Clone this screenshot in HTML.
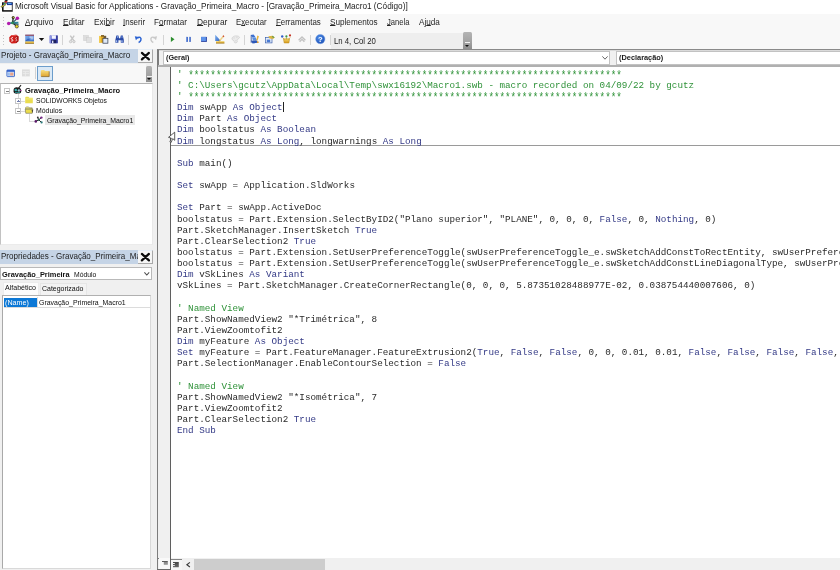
<!DOCTYPE html>
<html lang="pt-BR">
<head>
<meta charset="utf-8">
<title>Microsoft Visual Basic for Applications - Gravação_Primeira_Macro</title>
<style>
*{box-sizing:border-box;margin:0;padding:0}
html,body{width:840px;height:570px;overflow:hidden;background:#fff}
body{position:relative;font-family:"Liberation Sans",sans-serif;color:#222}
.a{position:absolute}
.t{position:absolute;white-space:nowrap;line-height:12px;height:12px;transform-origin:0 50%;filter:blur(0.3px)}
u{text-decoration:underline;text-underline-offset:0.2px;text-decoration-thickness:0.6px}
svg{position:absolute;overflow:visible;filter:blur(0.3px)}
.sep{position:absolute;width:1px;background:#d4d4d4;top:35px;height:9.6px}
#code{left:177px;top:68.7px;font-family:"Liberation Mono",monospace;font-size:9.283px;line-height:11.14px;color:#2a2a2a;white-space:pre;filter:blur(0.3px)}
#code .k{color:#343a86}
#code .c{color:#2f9239}
#code .s{display:inline-block;transform:translateY(1.4px) scale(1,1.3)}
</style>
</head>
<body>
<!-- ===== title bar ===== -->
<div class="a" style="left:0;top:0;width:840px;height:13.5px;background:#fff"></div>

<!-- ===== menu bar / toolbar dock ===== -->
<div class="a" style="left:0;top:13.6px;width:840px;height:36px;background:#f8f8f8"></div>
<div class="a" style="left:331.4px;top:33.3px;width:131.9px;height:15.8px;background:#eeeeee"></div>
<!-- toolbar end grip -->
<div class="a" style="left:463.3px;top:31.7px;width:8.3px;height:17.3px;border-radius:1.5px 1.5px 0 0;background:linear-gradient(#b4b4b4,#a2a2a2 60%,#8e8e8e)"></div>
<div class="a" style="left:465px;top:42.3px;width:5px;height:1px;background:#f2f2f2"></div>
<div class="a" style="left:465.2px;top:44.5px;width:0;height:0;border-left:2.3px solid transparent;border-right:2.3px solid transparent;border-top:2.6px solid #111"></div>
<!-- grips -->
<div class="a" style="left:3.2px;top:16.9px;width:1.3px;height:10px;background:repeating-linear-gradient(#c4c4c4 0 1.1px,transparent 1.1px 2.85px)"></div>
<div class="a" style="left:3.2px;top:34.9px;width:1.3px;height:10px;background:repeating-linear-gradient(#c4c4c4 0 1.1px,transparent 1.1px 2.85px)"></div>
<!-- toolbar separators -->
<div class="sep" style="left:62px"></div>
<div class="sep" style="left:128px"></div>
<div class="sep" style="left:162.5px"></div>
<div class="sep" style="left:244px"></div>
<div class="sep" style="left:310px"></div>
<div class="sep" style="left:329.5px"></div>
<!-- toolbar icons (coordinates in page px via viewBox) -->
<svg style="left:0;top:30px" width="340" height="20" viewBox="0 30 340 20">
<defs>
<linearGradient id="gb" x1="0" y1="0" x2="1" y2="1"><stop offset="0" stop-color="#7fb2ee"/><stop offset="1" stop-color="#2f62c4"/></linearGradient>
<linearGradient id="gy" x1="0" y1="0" x2="0" y2="1"><stop offset="0" stop-color="#f3d56a"/><stop offset="1" stop-color="#d79a1c"/></linearGradient>
<radialGradient id="gh" cx="0.4" cy="0.35" r="0.7"><stop offset="0" stop-color="#4d8eea"/><stop offset="1" stop-color="#1c4fb4"/></radialGradient>
</defs>
<!-- solidworks -->
<path d="M9.3 37.2 L11.2 35.2 L16.2 34.8 L18.5 36.6 L18.4 41.2 L16 43.3 L11.6 43.4 L9.4 41.5Z" fill="#cf1f1b"/>
<path d="M16.2 34.8 L18.5 36.6 L18.4 41.2 L16 43.3Z" fill="#a41412"/>
<path d="M11.2 35.2 L16.2 34.8 L17.3 35.8 L12 36.3Z" fill="#e4524c"/>
<path d="M12.9 37.6 C11 37.3 10.8 39.2 12.1 39.5 C13.4 39.8 13.2 41.5 11.2 41" stroke="#fff" stroke-width="1" fill="none"/>
<path d="M16.9 37.6 C15.6 37.4 15.5 39 16.3 39.4 C17.1 39.8 17 41.2 15.6 40.9" stroke="#f3d0d0" stroke-width="0.9" fill="none"/>
<!-- userform -->
<rect x="25.2" y="34.8" width="8.8" height="8.6" fill="url(#gb)"/>
<rect x="25.2" y="34.6" width="8.8" height="1.3" fill="#9a5468"/>
<rect x="29.5" y="36.6" width="4" height="1" fill="#e9f1fb"/>
<rect x="30.5" y="38.4" width="3" height="0.9" fill="#dbe8f8"/>
<path d="M25.6 40.6 L28.2 38.4 L30.5 40.2 L25.6 41.3Z" fill="#2a57b6" opacity=".8"/>
<rect x="25.2" y="41.4" width="8.8" height="2.1" fill="url(#gy)"/>
<rect x="25.2" y="43" width="8.8" height="0.6" fill="#9a7a30"/>
<!-- dropdown arrow -->
<path d="M38.9 38.1 H44.2 L41.55 41Z" fill="#111"/>
<!-- save -->
<rect x="49.7" y="35.4" width="7.9" height="7.8" rx="0.5" fill="#4a54c4"/>
<rect x="49.7" y="35.4" width="1.3" height="7.8" fill="#8b93e2"/>
<rect x="56.4" y="35.4" width="1.2" height="7.8" fill="#2a2f86"/>
<rect x="51.6" y="35.4" width="4.3" height="3.4" fill="#f4f6ff"/>
<rect x="51.4" y="40" width="4.8" height="3.2" fill="#1d215e"/>
<rect x="52" y="40.6" width="1.4" height="2.6" fill="#dfe3fa"/>
<!-- cut (disabled) -->
<path d="M70.3 35.6 L73.8 40.6 M74.2 35.6 L70.7 40.6" stroke="#c6c6c6" stroke-width="1.4" fill="none"/>
<circle cx="70.6" cy="41.6" r="1.2" stroke="#c6c6c6" stroke-width="1" fill="#e4e4e4"/>
<circle cx="73.9" cy="41.6" r="1.2" stroke="#c6c6c6" stroke-width="1" fill="#e4e4e4"/>
<!-- copy (disabled) -->
<rect x="83.5" y="35.5" width="5" height="5.2" fill="#dedede" stroke="#cfcfcf" stroke-width="0.5"/>
<rect x="86.7" y="37.6" width="5" height="5" fill="#e1e1e1" stroke="#cbcbcb" stroke-width="0.5"/>
<!-- paste -->
<rect x="99.1" y="35.9" width="6.4" height="6.9" rx="0.6" fill="#e6ad22"/>
<rect x="99.1" y="35.9" width="1.6" height="6.9" fill="#f3cf55"/>
<rect x="101" y="35" width="3" height="1.8" fill="#8a6a2c"/>
<rect x="103.6" y="35.8" width="2.6" height="2.4" fill="#6f5a36"/>
<rect x="102.9" y="38.3" width="5" height="4.9" fill="#dfe9f7" stroke="#2c3448" stroke-width="0.7"/>
<!-- find -->
<path d="M116.4 35.6 h2 l0.6 2.6 h1.2 l0.6 -2.6 h2 l1 4.2 v3 h-3 v-2.6 h-2.4 v2.6 h-3 v-3Z" fill="#2b4aa6"/>
<rect x="115.9" y="40.3" width="1.3" height="2" fill="#a8c2f2"/>
<rect x="121.3" y="40.3" width="1.3" height="2" fill="#a8c2f2"/>
<rect x="117" y="36" width="0.9" height="2" fill="#7ea0e6"/>
<rect x="121.6" y="36" width="0.9" height="2" fill="#7ea0e6"/>
<!-- undo -->
<path d="M137.4 38.3 C139.2 36 141.6 37.6 140.9 40 C140.5 41.4 139.6 42.1 138.6 42.5" stroke="#2a62d2" stroke-width="1.5" fill="none"/>
<path d="M134.8 36.3 L138.9 36.9 L135.9 40.3Z" fill="#2a62d2"/>
<!-- redo (disabled) -->
<path d="M154.5 38.3 C152.7 36 150.3 37.6 151 40 C151.4 41.4 152.3 42.1 153.3 42.5" stroke="#c9c9c9" stroke-width="1.4" fill="none"/>
<path d="M157.1 36.3 L153 36.9 L156 40.3Z" fill="#c9c9c9"/>
<!-- run -->
<path d="M170.9 36.7 L174.5 39.3 L170.9 42Z" fill="#2b8d2d"/>
<!-- pause -->
<rect x="186.1" y="36.9" width="1.8" height="5" fill="#3a62c4"/>
<rect x="189" y="36.9" width="1.8" height="5" fill="#3a62c4"/>
<rect x="186.1" y="36.9" width="0.7" height="5" fill="#84a8ea"/>
<rect x="189" y="36.9" width="0.7" height="5" fill="#84a8ea"/>
<!-- stop -->
<rect x="201.1" y="36.9" width="5.8" height="5" fill="#2b44a2"/>
<rect x="201.1" y="36.9" width="4.8" height="4.1" fill="#5f94ea"/>
<!-- design mode -->
<path d="M215.2 34.8 L221 41 L215.2 41Z" fill="url(#gb)"/>
<path d="M223.3 35.3 L224.4 36.3 L220.1 41.3 L218.7 41.5 L219 40.2Z" fill="#ecd28a"/>
<path d="M223.3 35.3 L224.4 36.3 L223.6 37.2 L222.5 36.2Z" fill="#cf4a3a"/>
<path d="M219 40.2 L220.1 41.3 L218.5 41.8Z" fill="#333"/>
<rect x="216" y="41.2" width="8.4" height="2.1" fill="url(#gy)"/>
<rect x="216" y="42.8" width="8.4" height="0.6" fill="#8e7228"/>
<!-- disabled palette -->
<path d="M232 38.2 C232.8 35.6 237.8 35.2 239.4 37 C240 38 238.2 38.8 237.3 39.5 C236.2 40.4 238.3 41.3 236.8 42.5 C235.5 43.4 233.8 42.6 234.2 41.4 C234.5 40.4 231.4 40.3 232 38.2Z" stroke="#cdcdcd" stroke-width="0.7" fill="#ebebeb"/>
<path d="M233.5 38 h1.4 M236 37.2 h1.6 M235 40.8 h1.4" stroke="#d2d2d2" stroke-width="0.7"/>
<!-- project explorer -->
<path d="M250.5 35 L253.6 34.6 L255.4 37 L252.6 37.5Z" fill="#3a6fd0"/>
<path d="M252 37.5 L255.5 37.2 L257 40 L253 40.5Z" fill="#5a8fe0"/>
<path d="M251 40.8 L256.5 40.3 L258.2 42.8 L252.5 43.4Z" fill="#2d58b8"/>
<path d="M251.2 35.5 V42.8" stroke="#27489a" stroke-width="0.8"/>
<path d="M257.3 35.4 L258.9 36.3 L257.5 40.7 L256.4 40.2Z" fill="#eab43a"/>
<circle cx="257.8" cy="42.2" r="0.9" fill="#e09a2a"/>
<!-- properties -->
<rect x="265.6" y="37.6" width="6.4" height="5.3" fill="#e4edf9" stroke="#3d62ae" stroke-width="0.7"/>
<rect x="266.8" y="39.6" width="3.4" height="2.6" fill="#4a7ad2"/>
<path d="M268.3 36.2 L272.5 35.8 L274.6 37.2 L273.2 39 L269.5 38.4Z" fill="#d9b341"/>
<path d="M272.5 35.8 L274.6 37.2 L274 38 L272 37Z" fill="#5e9a4a"/>
<!-- object browser -->
<path d="M283.4 38.8 H289.6 L288.9 43 H284.2Z" fill="url(#gy)" stroke="#b88a1e" stroke-width="0.5"/>
<path d="M282.6 37.6 L284.6 39.6 M290.2 37.4 L288.4 39.6 M286.5 37.4 V39.4" stroke="#c69a2a" stroke-width="0.7"/>
<circle cx="282.2" cy="36.4" r="1.2" fill="#2f5cc8"/>
<circle cx="286.4" cy="36.4" r="1.1" fill="#3c9a48"/>
<circle cx="290" cy="35.4" r="1.1" fill="#c43628"/>
<!-- toolbox (disabled) -->
<path d="M298.6 40.2 L302 37 L305.4 40.2 M299.6 41.8 L302 39.4 L304.4 41.8" stroke="#c2c2c2" stroke-width="1.3" fill="none"/>
<!-- help -->
<circle cx="320.3" cy="39.1" r="4.65" fill="url(#gh)" stroke="#7fa6e6" stroke-width="0.5"/>
<text x="320.3" y="41.9" font-family="Liberation Sans, sans-serif" font-size="7.6" font-weight="bold" fill="#fff" text-anchor="middle">?</text>
</svg>


<!-- ===== left dock ===== -->
<div class="a" style="left:0;top:49px;width:157px;height:521px;background:#f0f0f0"></div>
<!-- project title -->
<div class="a" style="left:0;top:49px;width:138px;height:14.3px;background:#c5d4e6"></div>
<div class="a" style="left:138px;top:49.2px;width:14.6px;height:14.2px;background:#f5f5f5;border-right:1px solid #a9a9a9;border-bottom:1px solid #a9a9a9;border-top:0.8px solid #e6eef6"></div>
<svg style="left:141.2px;top:52.1px" width="8.8" height="8.3" viewBox="0 0 8.8 8.3"><path d="M0.9 0.9L7.9 7.4M7.9 0.9L0.9 7.4" stroke="#0a0a0a" stroke-width="2.2" stroke-linecap="round" fill="none"/></svg>
<!-- project toolbar -->
<div class="a" style="left:0;top:64.3px;width:145.8px;height:18.4px;background:#f8f8f8"></div>
<div class="a" style="left:37px;top:65.5px;width:16px;height:15.8px;background:#dbe9f6;border:1px solid #6c9dcb"></div>
<div class="a" style="left:35px;top:67px;width:1px;height:12px;background:#d2d2d2"></div>
<div class="a" style="left:145.8px;top:66px;width:6.7px;height:16.3px;border-radius:1.5px 1.5px 0 0;background:linear-gradient(#b4b4b4,#a2a2a2 60%,#8e8e8e)"></div>
<div class="a" style="left:146.8px;top:76px;width:4.8px;height:1px;background:#f2f2f2"></div>
<div class="a" style="left:147px;top:78px;width:0;height:0;border-left:2.2px solid transparent;border-right:2.2px solid transparent;border-top:2.5px solid #111"></div>
<!-- tree box -->
<div class="a" style="left:0;top:82.8px;width:152.6px;height:162.2px;background:#fff;border:1px solid #b4b4b4;border-top:1.6px solid #b2b2b2;border-left:1.4px solid #c2c2c2;border-right-color:#e9e9e9;border-bottom-color:#ebebeb"></div>
<div class="a" style="left:45px;top:115.3px;width:89.5px;height:10px;background:#e9e9e9"></div>
<!-- tree lines -->
<div class="a" style="left:17.7px;top:94px;width:1px;height:4px;background:#d6d6d6"></div>
<div class="a" style="left:17.7px;top:104px;width:1px;height:4.3px;background:#d6d6d6"></div>
<div class="a" style="left:21px;top:100.5px;width:4px;height:1px;background:#dadada"></div>
<div class="a" style="left:21px;top:110.6px;width:4px;height:1px;background:#dadada"></div>
<div class="a" style="left:28.5px;top:114px;width:1px;height:7px;background:#d9d9d9"></div>
<div class="a" style="left:28.5px;top:120.5px;width:6px;height:1px;background:#d9d9d9"></div>
<!-- expanders -->
<div class="a" style="left:4.3px;top:88px;width:5.8px;height:5.8px;background:#fff;border:0.8px solid #c6c6c6"></div>
<div class="a" style="left:5.7px;top:90.5px;width:3px;height:0.8px;background:#808080"></div>
<div class="a" style="left:15.4px;top:98.2px;width:5.8px;height:5.8px;background:#fff;border:0.8px solid #c6c6c6"></div>
<div class="a" style="left:17px;top:100.7px;width:2.6px;height:0.8px;background:#7380b0"></div>
<div class="a" style="left:17.9px;top:99.8px;width:0.8px;height:2.6px;background:#7380b0"></div>
<div class="a" style="left:15.4px;top:108.3px;width:5.8px;height:5.8px;background:#fff;border:0.8px solid #c6c6c6"></div>
<div class="a" style="left:16.8px;top:110.75px;width:3px;height:0.8px;background:#808080"></div>

<!-- properties title -->
<div class="a" style="left:0;top:249.5px;width:138px;height:14.8px;background:#c5d4e6"></div>
<!-- combo -->
<div class="a" style="left:0;top:267.4px;width:152.3px;height:12.9px;background:#fff;border:0.8px solid #b9b9b9"></div>
<svg style="left:143.8px;top:272.2px" width="5.6" height="3.6" viewBox="0 0 5.6 3.6"><path d="M0.4 0.4L2.8 3L5.2 0.4" stroke="#4f4f4f" stroke-width="1.05" fill="none"/></svg>
<!-- tabs -->
<div class="a" style="left:40px;top:283.4px;width:46.8px;height:12px;background:#f3f3f3;border:0.8px solid #e6e6e6;border-bottom:none"></div>
<div class="a" style="left:2.8px;top:281.8px;width:36.4px;height:14px;background:#fcfcfc;border:0.8px solid #ececec;border-bottom:none"></div>
<!-- list -->
<div class="a" style="left:2.3px;top:295.2px;width:149.2px;height:274.2px;background:#fff;border:1px solid #b0b0b0;border-left:1.4px solid #a9a9a9;border-right-color:#d9d9d9;border-bottom-color:#d9d9d9"></div>
<div class="a" style="left:4.2px;top:297.5px;width:33px;height:9.3px;background:#0c78d6"></div>
<div class="a" style="left:4px;top:306.8px;width:146px;height:0.8px;background:#dcdcdc"></div>
<div class="a" style="left:37.3px;top:297px;width:0.8px;height:10px;background:#dcdcdc"></div>

<!-- ===== code window ===== -->
<div class="a" style="left:157px;top:49px;width:683px;height:521px;background:#f0f0f0;border-left:2px solid #7c7c7c;border-top:1.2px solid #8a8a8a"></div>
<!-- combos -->
<div class="a" style="left:158.5px;top:50.2px;width:682px;height:1.1px;background:#dadada"></div>
<div class="a" style="left:163.2px;top:51.1px;width:447.3px;height:13.6px;background:#fff;border:1px solid #c2c2c2"></div>
<div class="a" style="left:616.2px;top:51.1px;width:230px;height:13.6px;background:#fff;border:1px solid #c2c2c2"></div>
<svg style="left:601.9px;top:56.3px" width="6" height="3.8" viewBox="0 0 6 3.8"><path d="M0.4 0.4L3 3.2L5.6 0.4" stroke="#5c5c5c" stroke-width="0.95" fill="none"/></svg>
<!-- code area -->
<div class="a" style="left:158.2px;top:65.1px;width:682px;height:1.8px;background:#b0b0b0"></div>
<div class="a" style="left:158.2px;top:66.9px;width:682px;height:491.5px;background:#fff"></div>
<div class="a" style="left:158.2px;top:66.9px;width:12.9px;height:491.5px;background:#f0f0f0;border-right:1px solid #5f5f5f"></div>
<!-- procedure separator -->
<div class="a" style="left:171px;top:144.6px;width:669px;height:0.9px;background:#9a9a9a"></div>
<!-- caret -->
<div class="a" style="left:283.3px;top:101.5px;width:0.9px;height:10px;background:#222"></div>
<!-- bottom scrollbar -->
<div class="a" style="left:158.2px;top:558.9px;width:682px;height:11.5px;background:#f0f0f0"></div>
<div class="a" style="left:194.3px;top:559.1px;width:130.3px;height:11px;background:#cdcdcd"></div>
<svg style="left:185.5px;top:561.6px" width="4.4" height="5.4" viewBox="0 0 4.4 5.4"><path d="M3.9 0.4L0.9 2.7L3.9 5" stroke="#3c3c3c" stroke-width="1.15" fill="none"/></svg>
<!-- view buttons -->
<div class="a" style="left:158.8px;top:558.3px;width:10.9px;height:10.3px;background:#f9f9f9"></div>
<div class="a" style="left:157px;top:568.6px;width:14px;height:1px;background:#6a6a6a"></div>
<div class="a" style="left:170.1px;top:558px;width:1px;height:11.6px;background:#5f5f5f"></div>
<div class="a" style="left:158.8px;top:569.6px;width:11px;height:1px;background:#f0f0f0"></div>
<div class="a" style="left:171px;top:558.7px;width:10.8px;height:11.3px;background:#f5f5f5;border-top:0.9px solid #858585"></div>
<svg style="left:161.8px;top:561px" width="6" height="4" viewBox="0 0 6 4"><path d="M0 0.5H5.8M1.8 1.8H5.8M1.8 3H5.8" stroke="#4a4a4a" stroke-width="0.9"/></svg>
<svg style="left:173.2px;top:561.8px" width="6" height="5.2" viewBox="0 0 6 5.2"><path d="M0 0.5H5.8M1.8 1.55H5.8M0 2.6H5.8M1.8 3.65H5.8M0 4.7H5.8" stroke="#3c3c3c" stroke-width="0.95"/></svg>

<!-- title icon -->
<svg style="left:0;top:0" width="24" height="30" viewBox="0 0 24 30">
<rect x="2.8" y="3" width="9.6" height="7.9" fill="#fff" stroke="#111" stroke-width="1.1"/>
<path d="M12.5 3.4 V11 H3.4" stroke="#8a8a8a" stroke-width="0.7" fill="none"/>
<path d="M2.7 2.6 V11.2" stroke="#111" stroke-width="1.3"/>
<path d="M2.4 10.9 H12.4" stroke="#111" stroke-width="1"/>
<rect x="7" y="2.5" width="5.5" height="2.6" fill="#1c3f9e"/>
<rect x="8" y="3" width="3.4" height="1" fill="#55a8f2"/>
<path d="M4.6 7.9 H10.5" stroke="#d8d8d8" stroke-width="0.6" stroke-dasharray="0.8 0.6"/>
<path d="M0.9 6.5 L5 3.6 L5.9 4.7 L1.8 7.6Z" fill="#e6de3e" stroke="#222" stroke-width="0.5"/>
<path d="M3.4 3.6 L4.6 2.8 L5.4 3.8 L4.2 4.6Z" fill="#2f9a4a"/>
<path d="M2.8 4.4 L3.6 3.8 L4.2 4.6 L3.4 5.2Z" fill="#2a48b8"/>
<path d="M4.4 1.4 L6.2 0.6 L7.6 1.6 L6.6 2.6 L4.9 2.6Z" fill="#c02020"/>
<path d="M4.2 0.9 L5.6 0 H7.2 L7.9 1 L6.2 0.9 L4.6 1.6Z" fill="#1a1a1a"/>
<!-- menu icon -->
<path d="M8.7 23.4 L12.6 22.9 L18.4 22.6" stroke="#2b8798" stroke-width="1.6" fill="none"/>
<path d="M12.6 22.9 L17.2 18.4" stroke="#2a5a66" stroke-width="1.3" fill="none"/>
<path d="M13.2 17.8 L12.6 22.9 L16.8 26.3" stroke="#26302e" stroke-width="1.4" fill="none"/>
<path d="M14.5 23.5 L18.6 24.4" stroke="#2a6a78" stroke-width="1.2" fill="none"/>
<circle cx="17.4" cy="18.2" r="1.75" fill="#b21cae"/>
<circle cx="8.7" cy="23.4" r="1.75" fill="#b21cae"/>
<circle cx="16.8" cy="26.4" r="1.6" fill="#e8dc28" stroke="#222" stroke-width="0.6"/>
<circle cx="12.6" cy="22.9" r="1.4" fill="#2c8a58"/>
<circle cx="13.2" cy="17.6" r="1.5" fill="#3a3a24"/>
<circle cx="13.4" cy="17.4" r="0.6" fill="#c8bc3a"/>
</svg>
<!-- project toolbar icons + tree icons -->
<svg style="left:0;top:62px" width="60" height="66" viewBox="0 62 60 66">
<defs>
<linearGradient id="gf" x1="0" y1="0" x2="0" y2="1"><stop offset="0" stop-color="#f7df82"/><stop offset="1" stop-color="#dfa42e"/></linearGradient>
</defs>
<!-- view code -->
<rect x="6.9" y="70" width="7.6" height="6.6" rx="0.6" fill="#cfe0f6" stroke="#3d69c8" stroke-width="0.9"/>
<rect x="6.9" y="70" width="7.6" height="1.8" fill="#3563cc"/>
<rect x="10.2" y="72.6" width="3.2" height="3" fill="#e8a28a"/>
<rect x="7.8" y="72.6" width="2" height="3" fill="#9dbcec"/>
<!-- view object disabled -->
<rect x="22" y="69.4" width="7.8" height="7" fill="#dcdcdc"/>
<path d="M22.8 71.6 H29 M22.8 73.6 H29 M25.4 71.6 V76" stroke="#ececec" stroke-width="0.8"/>
<!-- folder toggle -->
<path d="M40.8 71 L41.6 70 H44.2 L45 71 H49.2 V76.6 H40.8Z" fill="url(#gf)"/>
<path d="M49.2 71.4 V76.6 H41.2" stroke="#7c5a1c" stroke-width="0.7" fill="none"/>
<!-- project icon -->
<path d="M13.6 90.2 C13.4 88 15.4 87 17.6 87.4 C20 87.6 21.6 88.8 21.2 91 C21.6 92.6 20.4 93.6 17.6 93.6 C14.8 93.8 13 93 13.6 90.2Z" fill="#1a1a1a"/>
<circle cx="15.8" cy="90" r="1.3" fill="#36b0b0"/>
<circle cx="18.9" cy="90.4" r="1.2" fill="#8fd8d8"/>
<path d="M15 92.4 H20" stroke="#2d9a9a" stroke-width="0.9"/>
<path d="M18.2 88.6 L21 85.2" stroke="#222" stroke-width="1.1"/>
<path d="M19.4 90.2 L21.6 90.6" stroke="#b040a0" stroke-width="1"/>
<!-- folder closed -->
<path d="M25.2 97.6 L25.9 96.8 H28.4 L29.2 97.8 H32.8 V103.3 H25.2Z" fill="#eadc4e"/>
<path d="M25.2 98.9 H32.8" stroke="#f6f0a0" stroke-width="0.7"/>
<!-- folder open -->
<path d="M25.6 107.6 L26.3 106.9 H28.6 L29.4 107.8 H32.2 V109 H25.6Z" fill="#efe680" stroke="#6a6a4a" stroke-width="0.5"/>
<path d="M25.2 109.2 H32.9 L32.2 113.3 H25.8Z" fill="#eadc4e" stroke="#55553a" stroke-width="0.5"/>
<path d="M31.6 110.4 L32.9 109.4 L32.4 113 Z" fill="#2a2a2a"/>
<!-- module icon -->
<path d="M35.6 121.4 L38.8 119.8 L41.4 117.6 M38.8 119.8 L41.6 122.6 M38.8 119.8 L37.6 117.4" stroke="#222" stroke-width="1" fill="none"/>
<circle cx="41.4" cy="117.6" r="1.2" fill="#7a2a8a"/>
<circle cx="35.8" cy="121.4" r="1.3" fill="#5a1a6a"/>
<circle cx="41.6" cy="122.4" r="1.1" fill="#2a7a7a"/>
<circle cx="38.8" cy="119.8" r="1.1" fill="#2f6a5a"/>
<circle cx="37.8" cy="117.4" r="0.9" fill="#333"/>
</svg>
<!-- mouse pointer (mirrored arrow) -->
<svg style="left:166px;top:130px" width="12" height="15" viewBox="166 130 12 15">
<path d="M174.7 132.2 V140.3 L172.7 138.6 L171.2 142.4 L169.9 141.9 L171.3 138.2 L168.5 137.3Z" fill="#fff" stroke="#333" stroke-width="0.8" stroke-linejoin="round"/>
</svg>

<div class="t" id="title" style="left:15.30px;top:-0.01px;font-size:8.4px;transform:scaleX(0.9826);color:#1c1c1c">Microsoft Visual Basic for Applications - Gravação_Primeira_Macro - [Gravação_Primeira_Macro1 (Código)]</div>
<div class="t" id="m1" style="left:24.50px;top:16.39px;font-size:8.4px;transform:scaleX(1.0033);color:#262626"><u>A</u>rquivo</div>
<div class="t" id="m2" style="left:62.90px;top:16.39px;font-size:8.4px;transform:scaleX(0.9867);color:#262626"><u>E</u>ditar</div>
<div class="t" id="m3" style="left:93.70px;top:16.39px;font-size:8.4px;transform:scaleX(0.9872);color:#262626">Exi<u>b</u>ir</div>
<div class="t" id="m4" style="left:122.90px;top:16.39px;font-size:8.4px;transform:scaleX(0.9493);color:#262626"><u>I</u>nserir</div>
<div class="t" id="m5" style="left:154.30px;top:16.39px;font-size:8.4px;transform:scaleX(0.9706);color:#262626">F<u>o</u>rmatar</div>
<div class="t" id="m6" style="left:196.60px;top:16.39px;font-size:8.4px;transform:scaleX(1.0039);color:#262626"><u>D</u>epurar</div>
<div class="t" id="m7" style="left:236.00px;top:16.39px;font-size:8.4px;transform:scaleX(0.9285);color:#262626">E<u>x</u>ecutar</div>
<div class="t" id="m8" style="left:275.80px;top:16.39px;font-size:8.4px;transform:scaleX(0.9435);color:#262626"><u>F</u>erramentas</div>
<div class="t" id="m9" style="left:330.00px;top:16.39px;font-size:8.4px;transform:scaleX(0.9753);color:#262626"><u>S</u>uplementos</div>
<div class="t" id="m10" style="left:386.60px;top:16.39px;font-size:8.4px;transform:scaleX(0.9073);color:#262626"><u>J</u>anela</div>
<div class="t" id="m11" style="left:418.60px;top:16.39px;font-size:8.4px;transform:scaleX(0.9742);color:#262626">Aj<u>u</u>da</div>
<div class="t" id="lncol" style="left:333.80px;top:34.59px;font-size:8.4px;transform:scaleX(0.9276);color:#222">Ln 4, Col 20</div>
<div class="t" id="ptitle" style="left:0.80px;top:48.59px;font-size:8.4px;transform:scaleX(0.9637);color:#1e1e1e">Projeto - Gravação_Primeira_Macro</div>
<div class="t" id="tr1" style="left:24.80px;top:84.86px;font-size:7.9px;transform:scaleX(0.9560);font-weight:bold;color:#111">Gravação_Primeira_Macro</div>
<div class="t" id="tr2" style="left:35.80px;top:94.96px;font-size:7.9px;transform:scaleX(0.8555);color:#0d0d0d">SOLIDWORKS Objetos</div>
<div class="t" id="tr3" style="left:35.80px;top:105.06px;font-size:7.9px;transform:scaleX(0.8750);color:#0d0d0d">Módulos</div>
<div class="t" id="tr4" style="left:46.70px;top:115.16px;font-size:7.9px;transform:scaleX(0.8746);color:#0d0d0d">Gravação_Primeira_Macro1</div>
<div class="t" id="prtitle" style="left:0.60px;top:250.09px;font-size:8.4px;transform:scaleX(0.9602);color:#1e1e1e">Propriedades - Gravação_Primeira_Ma</div>
<div class="t" id="cb1" style="left:1.90px;top:268.86px;font-size:7.9px;transform:scaleX(0.9395);font-weight:bold;color:#111">Gravação_Primeira</div>
<div class="t" id="cb2" style="left:73.90px;top:268.86px;font-size:7.9px;transform:scaleX(0.8613);color:#0d0d0d">Módulo</div>
<div class="t" id="tab1" style="left:4.80px;top:281.76px;font-size:7.9px;transform:scaleX(0.8945);color:#0d0d0d">Alfabético</div>
<div class="t" id="tab2" style="left:42.30px;top:283.36px;font-size:7.9px;transform:scaleX(0.8842);color:#0d0d0d">Categorizado</div>
<div class="t" id="pn" style="left:4.80px;top:296.96px;font-size:7.9px;transform:scaleX(0.9045);color:#fff">(Name)</div>
<div class="t" id="pv" style="left:39.00px;top:296.96px;font-size:7.9px;transform:scaleX(0.8787);color:#0d0d0d">Gravação_Primeira_Macro1</div>
<div class="t" id="geral" style="left:165.90px;top:51.90px;font-size:7.8px;transform:scaleX(0.9308);color:#1a1a1a;font-weight:bold">(Geral)</div>
<div class="t" id="decl" style="left:618.60px;top:51.90px;font-size:7.8px;transform:scaleX(0.9463);color:#1a1a1a;font-weight:bold">(Declaração)</div>

<!-- props close (over clipped title) -->
<div class="a" style="left:138px;top:249.6px;width:14.6px;height:14.6px;background:#f5f5f5;border-right:1px solid #a9a9a9;border-bottom:1px solid #a9a9a9;border-top:0.8px solid #e6eef6"></div>
<svg style="left:141.2px;top:252.7px" width="8.8" height="8.3" viewBox="0 0 8.8 8.3"><path d="M0.9 0.9L7.9 7.4M7.9 0.9L0.9 7.4" stroke="#0a0a0a" stroke-width="2.2" stroke-linecap="round" fill="none"/></svg>
<!-- code -->
<div class="a" id="code"><span class="c">' <span class="s">******************************************************************************</span></span>
<span class="c">' C:\Users\gcutz\AppData\Local\Temp\swx16192\Macro1.swb - macro recorded on 04/09/22 by gcutz</span>
<span class="c">' <span class="s">******************************************************************************</span></span>
<span class="k">Dim</span> swApp <span class="k">As Object</span>
<span class="k">Dim</span> Part <span class="k">As Object</span>
<span class="k">Dim</span> boolstatus <span class="k">As Boolean</span>
<span class="k">Dim</span> longstatus <span class="k">As Long</span>, longwarnings <span class="k">As Long</span>

<span class="k">Sub</span> main()

<span class="k">Set</span> swApp = Application.SldWorks

<span class="k">Set</span> Part = swApp.ActiveDoc
boolstatus = Part.Extension.SelectByID2("Plano superior", "PLANE", 0, 0, 0, <span class="k">False</span>, 0, <span class="k">Nothing</span>, 0)
Part.SketchManager.InsertSketch <span class="k">True</span>
Part.ClearSelection2 <span class="k">True</span>
boolstatus = Part.Extension.SetUserPreferenceToggle(swUserPreferenceToggle_e.swSketchAddConstToRectEntity, swUserPreferenceOption_e.swDetailingNoOptionSpecified, <span class="k">False</span>)
boolstatus = Part.Extension.SetUserPreferenceToggle(swUserPreferenceToggle_e.swSketchAddConstLineDiagonalType, swUserPreferenceOption_e.swDetailingNoOptionSpecified, <span class="k">True</span>)
<span class="k">Dim</span> vSkLines <span class="k">As Variant</span>
vSkLines = Part.SketchManager.CreateCornerRectangle(0, 0, 0, 5.87351028488977E-02, 0.038754440007606, 0)

<span class="c">' Named View</span>
Part.ShowNamedView2 "*Trimétrica", 8
Part.ViewZoomtofit2
<span class="k">Dim</span> myFeature <span class="k">As Object</span>
<span class="k">Set</span> myFeature = Part.FeatureManager.FeatureExtrusion2(<span class="k">True</span>, <span class="k">False</span>, <span class="k">False</span>, 0, 0, 0.01, 0.01, <span class="k">False</span>, <span class="k">False</span>, <span class="k">False</span>, <span class="k">False</span>, 1.74532925199433E-02, 1.74532925199433E-02, <span class="k">False</span>, <span class="k">False</span>, <span class="k">False</span>, <span class="k">False</span>, <span class="k">True</span>, <span class="k">True</span>, <span class="k">True</span>, 0, 0, <span class="k">False</span>)
Part.SelectionManager.EnableContourSelection = <span class="k">False</span>

<span class="c">' Named View</span>
Part.ShowNamedView2 "*Isométrica", 7
Part.ViewZoomtofit2
Part.ClearSelection2 <span class="k">True</span>
<span class="k">End Sub</span></div>
</body>
</html>
